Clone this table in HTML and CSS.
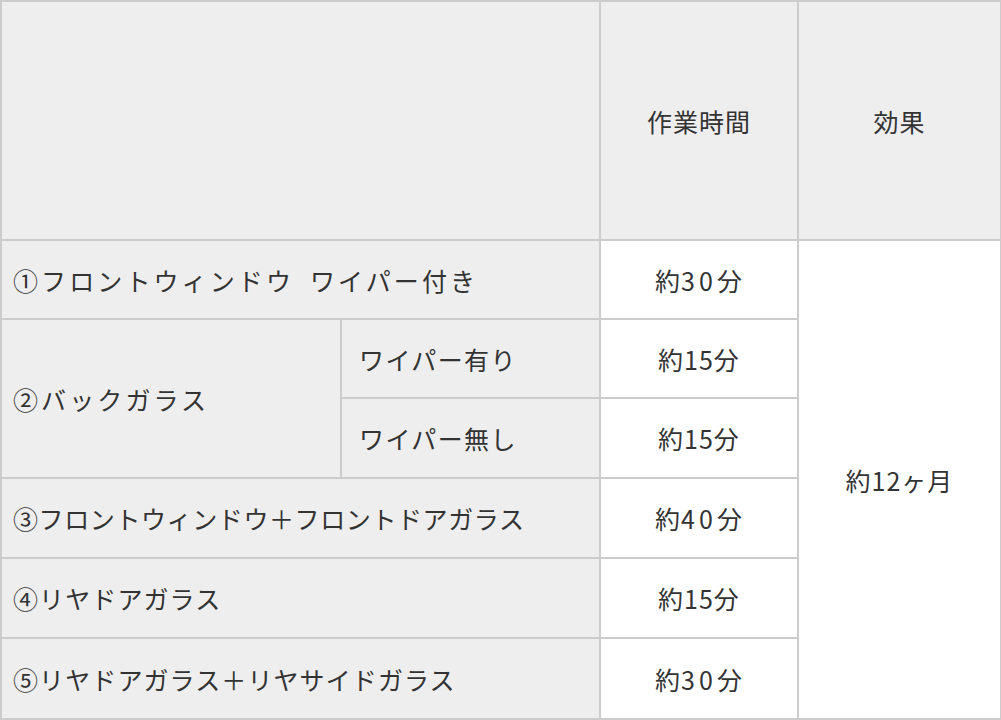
FILE: index.html
```html
<!DOCTYPE html>
<html lang="ja">
<head>
<meta charset="utf-8">
<link rel="stylesheet" href="styles.css">
</head>
<body>
<table class="price">
  <colgroup>
    <col class="c1"><col class="c2"><col class="c3"><col class="c4">
  </colgroup>
  <tr class="head">
    <th colspan="2"></th>
    <th>作業時間</th>
    <th>効果</th>
  </tr>
  <tr class="r r1">
    <td class="name wide" colspan="2">①フロントウィンドウ<span class="gap"></span>ワイパー付き</td>
    <td class="time">約<span class="num">30</span>分</td>
    <td class="effect" rowspan="6">約12ヶ月</td>
  </tr>
  <tr class="r r1">
    <td class="name wide" rowspan="2">②バックガラス</td>
    <td class="name sub">ワイパー有り</td>
    <td class="time">約15分</td>
  </tr>
  <tr class="r">
    <td class="name sub">ワイパー無し</td>
    <td class="time">約15分</td>
  </tr>
  <tr class="r">
    <td class="name tight" colspan="2">③フロントウィンドウ＋フロントドアガラス</td>
    <td class="time">約<span class="num">40</span>分</td>
  </tr>
  <tr class="r">
    <td class="name" colspan="2">④リヤドアガラス</td>
    <td class="time">約15分</td>
  </tr>
  <tr class="r last">
    <td class="name" colspan="2">⑤リヤドアガラス＋リヤサイドガラス</td>
    <td class="time">約<span class="num">30</span>分</td>
  </tr>
</table>
</body>
</html>
```
FILE: styles.css
```css
html, body {
  margin: 0;
  padding: 0;
  background: #ffffff;
}
body {
  font-family: "Noto Sans CJK JP", "Noto Sans", sans-serif;
  color: #333333;
}
.price {
  border-collapse: collapse;
  table-layout: fixed;
  width: 1000px;
  border: 2px solid #cccccc;
}
.c1 { width: 340px; }
.c2 { width: 259px; }
.c3 { width: 198px; }
.c4 { width: 203px; }
.price th,
.price td {
  border: 2px solid #cccccc;
  padding: 0;
  font-size: 25px;
  font-weight: 400;
  line-height: 1.2;
  letter-spacing: 1px;
}
.price th {
  background: #eeeeee;
  text-align: center;
}
.head { height: 239px; }
.r { height: 80px; }
.r1 { height: 79px; }
.last { height: 81px; }
.price .name {
  background: #eeeeee;
  text-align: left;
  padding-left: 11px;
  letter-spacing: 1.1px;
}
.price .name.sub {
  padding-left: 17px;
  letter-spacing: 1.4px;
}
.price .name.wide { letter-spacing: 3.1px; }
.price .name.tight { letter-spacing: 0.6px; }
.gap { display: inline-block; width: 16px; }
.price .time,
.price .effect {
  background: #ffffff;
  text-align: center;
}
.num { letter-spacing: 4px; }
```
